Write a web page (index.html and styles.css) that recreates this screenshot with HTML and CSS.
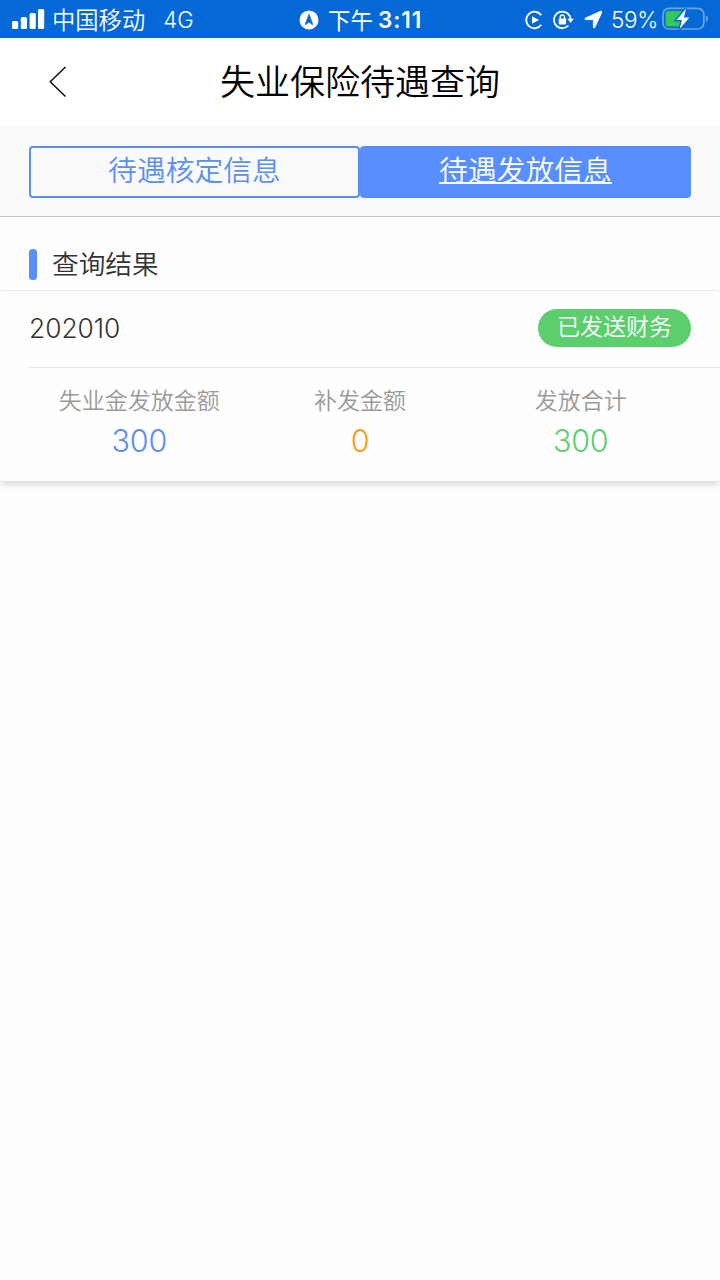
FILE: index.html
```html
<!DOCTYPE html>
<html lang="zh-CN">
<head>
<meta charset="utf-8">
<title>失业保险待遇查询</title>
<link rel="stylesheet" href="styles.css">
</head>
<body>
<div class="status">
  <div class="status-left">
    <svg class="signal" width="33" height="20" viewBox="0 0 33 20" fill="#fff"><rect x="0" y="12" width="6.2" height="8" rx="1.6"/><rect x="8.8" y="8" width="6.2" height="12" rx="1.6"/><rect x="17.6" y="4" width="6.2" height="16" rx="1.6"/><rect x="26" y="0" width="6.2" height="20" rx="1.6"/></svg>
    <span class="carrier">中国移动</span>
    <span class="network">4G</span>
  </div>
  <div class="status-time">
    <svg width="20" height="20" viewBox="0 0 20 20"><circle cx="10" cy="10" r="9.5" fill="#fff"/><path d="M10 4 L13.8 14.3 Q13.6 15.2 12.6 14.2 Q10 10.5 7.4 14.2 Q6.4 15.2 6.2 14.3 Z" fill="#0568d7" stroke="#0568d7" stroke-width=".6"/></svg>
    <span class="period">下午</span><span class="clock">3:11</span>
  </div>
  <div class="status-right">
    <svg width="18" height="20" viewBox="0 0 18 20"><path d="M16.3 5.2 A8.3 8.3 0 1 0 16.3 14.8" fill="none" stroke="#fff" stroke-width="1.8"/><path d="M7 6.3 L14 10 L7 13.7 Z" fill="#fff"/></svg>
    <svg class="lock" width="21" height="20" viewBox="0 0 21 20"><path d="M17.6 10 A8.3 8.3 0 1 0 15.4 15.5" fill="none" stroke="#fff" stroke-width="1.8"/><path d="M14.3 8.7 H20.8 L17.6 12.9 Z" fill="#fff"/><rect x="5.7" y="8.5" width="7.4" height="6" rx="1" fill="#fff"/><path d="M7.2 9 V7.2 a2.2 2.2 0 0 1 4.4 0 V9" fill="none" stroke="#fff" stroke-width="1.4"/></svg>
    <svg class="arrow" width="19" height="19" viewBox="0 0 19 19"><path d="M1.2 8.2 L16.5 1.3 Q18.2 .8 17.7 2.5 L10.8 17.5 Q9.6 18.8 9.4 17 V9.6 H2 Q.2 9.3 1.2 8.2 Z" fill="#fff" stroke="#fff" stroke-width=".9" stroke-linejoin="round"/></svg>
    <span class="percent">59%</span>
    <svg class="battery" width="46" height="24" viewBox="0 0 46 24"><rect x="1" y="1.4" width="40.8" height="20.6" rx="6" fill="none" stroke="#69a4e7" stroke-width="1.7"/><path d="M43.8 8.5 Q46 9 46 11.8 T43.8 15 Z" fill="#69a4e7"/><rect x="3.6" y="4" width="17.4" height="15.5" rx="3" fill="#34c759"/><path d="M24.2 1.6 L14.6 13 H20 L17.6 22 L27.4 10.6 H21.8 Z" fill="#fff" stroke="#0568d7" stroke-width="2.8" paint-order="stroke"/></svg>
  </div>
</div>
<header class="header">
  <svg class="back" width="18" height="32" viewBox="0 0 18 32"><path d="M16.5 1 L1.2 15.8 L16.5 30.5" fill="none" stroke="#111" stroke-width="1.5"/></svg>
  <h1 class="title">失业保险待遇查询</h1>
</header>
<nav class="tabs">
  <a class="tab">待遇核定信息</a>
  <a class="tab tab-active">待遇发放信息</a>
</nav>
<main>
  <div class="section-title"><span class="marker"></span><h2 class="section-text">查询结果</h2></div>
  <section class="card">
    <div class="card-head"><span class="month">202010</span><span class="state">已发送财务</span></div>
    <div class="amounts">
      <div class="amount"><span class="label">失业金发放金额</span><span class="value blue">300</span></div>
      <div class="amount"><span class="label">补发金额</span><span class="value orange">0</span></div>
      <div class="amount"><span class="label">发放合计</span><span class="value green">300</span></div>
    </div>
  </section>
</main>
</body>
</html>
```
FILE: styles.css
```css
* { box-sizing: border-box; }
body {
  margin: 0;
  min-height: 1280px;
  background: #fefefe;
  color: #333;
  font-family: Inter, "Noto Sans CJK SC", sans-serif;
  font-weight: 350;
}
h1, h2 { margin: 0; font-weight: inherit; }
svg { display: block; flex: none; }
.status {
  display: grid;
  grid-template-columns: 299px 1fr 195px;
  height: 38px;
  background: #0568d7;
  color: #fff;
  line-height: 38px;
  white-space: nowrap;
}
.status-left, .status-time, .status-right { display: flex; align-items: center; height: 38px; padding-top: 1px; }
.status-left { padding-left: 12px; }
.signal { margin-top: -1px; }
.carrier { margin-left: 7px; padding-top: 3px; font-size: 23.3px; }
.network { margin-left: 18px; padding-top: 1px; font-size: 22.2px; }
.period { margin-left: 9px; padding-top: 2px; font-size: 22.5px; font-weight: 400; }
.clock { margin-left: 5px; padding-top: 1px; font-size: 22.5px; font-weight: 600; letter-spacing: .9px; }
.lock { margin-left: 10px; }
.arrow { margin-left: 10px; }
.percent { margin-left: 8px; padding-top: 1px; font-size: 22.5px; letter-spacing: -.3px; }
.battery { margin-left: 4px; margin-top: -2px; }
.header {
  display: grid;
  grid-template-columns: 49px 1fr 49px;
  align-items: center;
  height: 88px;
  background: #fff;
  color: #000;
}
.back { grid-column: 2; grid-row: 1; }
.title { grid-column: 2; grid-row: 1; justify-self: center; font-size: 35px; line-height: 88px; }
.tabs {
  display: flex;
  height: 91px;
  padding: 20px 29px 0;
  border-bottom: 1px solid #c8c8ca;
  background: #fafafa;
}
.tab {
  flex: 1;
  height: 52px;
  border: 2px solid #5a8eef;
  border-radius: 4px;
  color: #5b8ff0;
  font-size: 28.8px;
  line-height: 46px;
  text-align: center;
}
.tab-active { border-color: #598eff; background: #598eff; color: #fff; text-decoration: underline; text-decoration-thickness: 2px; }
.section-title { display: flex; align-items: center; height: 73px; padding: 21px 29px 0; }
.marker { width: 7.5px; height: 31px; border-radius: 3.5px; background: #598eff; }
.section-text { margin-left: 15.5px; font-size: 26.7px; line-height: 50px; }
.card {
  height: 191px;
  border-top: 1px solid #e8e8e8;
  border-radius: 4px;
  background: #fefefe;
  box-shadow: 0 5px 7px -1px rgba(0, 0, 0, .14);
}
.card-head {
  display: flex;
  align-items: center;
  justify-content: space-between;
  height: 77px;
  margin-left: 29px;
  padding: 0 29px 2px 0;
  border-bottom: 1px solid #e5e5e5;
}
.month { font-size: 26.3px; }
.state { width: 153px; height: 38px; border-radius: 19px; background: #5dce6e; color: #fff; font-size: 23px; line-height: 36px; text-align: center; }
.amounts { display: grid; grid-template-columns: repeat(3, 1fr); padding: 16px 29px 0; }
.amount { display: flex; flex-direction: column; align-items: center; }
.label { color: #999; font-size: 23px; line-height: 34px; }
.value { font-size: 30.5px; line-height: 46px; letter-spacing: -.2px; }
.blue { color: #5b8ff0; }
.orange { color: #f49e1b; }
.green { color: #5dce6e; }
```
